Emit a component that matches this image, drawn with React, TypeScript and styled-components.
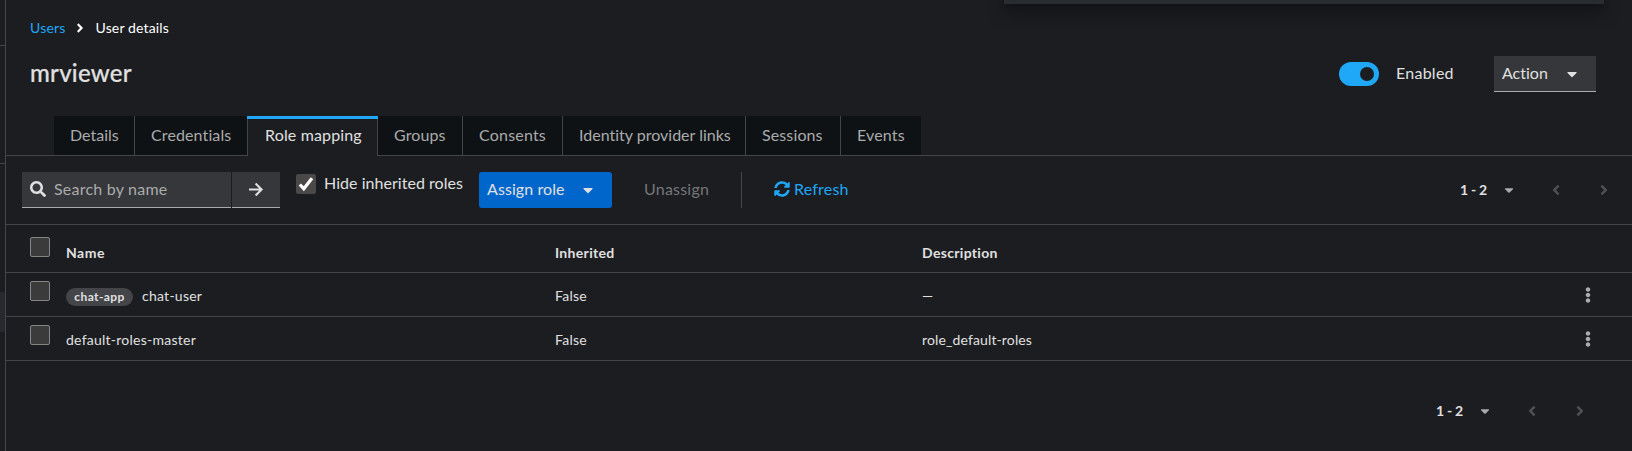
import React from "react";
import styled, { createGlobalStyle, css } from "styled-components";
import {
  FaAngleLeft,
  FaAngleRight,
  FaCaretDown,
  FaEllipsisV,
  FaSearch,
  FaSyncAlt,
} from "react-icons/fa";

const line = "#444548";
const surface = "#1b1d21";
const control = "#36373a";
const text = "#e0e0e0";
const muted = "#aaabac";
const link = "#1fa7f8";

const GlobalStyle = createGlobalStyle`
  * { box-sizing: border-box; }
  body {
    margin: 0;
    background: ${surface};
    color: ${text};
    font-family: Lato, "Liberation Sans", sans-serif;
    font-size: 16px;
    line-height: 24px;
    font-variant-ligatures: none;
    overflow: hidden;
  }
  svg { display: block; flex: none; }
`;

const Page = styled.div`
  display: flex;
  width: 1632px;
  height: 451px;
  position: relative;
`;

const Rail = styled.aside`
  width: 6px;
  flex: none;
  border-right: 1px solid ${line};
  display: flex;
  flex-direction: column;
`;

const RailSection = styled.div<{ $height: number }>`
  height: ${(p) => p.$height}px;
  border-bottom: 1px solid ${line};
`;

const RailCurrent = styled.div`
  height: 40px;
  margin-top: 128px;
  background: #26292d;
`;

const Popover = styled.div`
  position: absolute;
  top: 0;
  left: 1004px;
  width: 600px;
  height: 4px;
  background: #292c31;
  box-shadow: 0 8px 16px rgba(3, 3, 3, 0.8), 0 0 6px rgba(3, 3, 3, 0.6);
`;

const Main = styled.main`
  flex: 1;
  min-width: 0;
`;

const Label = styled.span<{ $track?: number }>`
  display: block;
  padding-bottom: 2px;
  letter-spacing: ${(p) => p.$track ?? 0}px;
  white-space: nowrap;
`;

const Breadcrumb = styled.nav`
  display: flex;
  align-items: center;
  height: 21px;
  margin: 18px 0 0 24px;
  font-size: 14px;
  color: #fff;
  svg { margin: -1px 9px 0 7px; }
`;

const Link = styled.a`
  color: ${link};
`;

const Header = styled.header`
  display: flex;
  align-items: center;
  height: 36px;
  margin: 17px 36px 0 24px;
`;

const Title = styled.h1`
  margin: -2px 0 0;
  flex: 1;
  font-size: 24px;
  font-weight: 500;
  line-height: 31px;
  -webkit-text-stroke: 0.2px ${text};
`;

const Toggle = styled.span`
  display: flex;
  justify-content: flex-end;
  align-items: center;
  width: 40px;
  height: 24px;
  padding-right: 5px;
  margin-right: 17px;
  border-radius: 12px;
  background: ${link};
  &::after {
    content: "";
    width: 14px;
    height: 14px;
    border-radius: 50%;
    background: ${surface};
  }
`;

const EnabledLabel = styled.div`
  width: 98px;
`;

const ActionButton = styled.button`
  display: flex;
  align-items: center;
  justify-content: space-between;
  width: 102px;
  height: 36px;
  padding: 0 16px 0 8px;
  border: 0;
  border-bottom: 1px solid ${muted};
  background: ${control};
  color: ${text};
  font: inherit;
`;

const Tabs = styled.div`
  display: flex;
  height: 40px;
  margin-top: 24px;
  padding-left: 48px;
  background: linear-gradient(${line}, ${line}) bottom / 100% 1px no-repeat;
`;

const Tab = styled.div<{ $width: number; $active?: boolean; $edge?: boolean }>`
  display: flex;
  align-items: center;
  width: ${(p) => p.$width}px;
  height: 39px;
  padding-left: 16px;
  background: #0f1214;
  color: ${muted};
  border-right: ${(p) => (p.$edge ? `1px solid ${line}` : 0)};
  ${(p) =>
    p.$active &&
    css`
      height: 40px;
      padding: 0 0 1px 18px;
      color: ${text};
      background: linear-gradient(${link}, ${link}) top / 100% 3px no-repeat,
        linear-gradient(${line}, ${line}) left / 1px 100% no-repeat,
        linear-gradient(${line}, ${line}) right / 1px 100% no-repeat, ${surface};
    `}
`;

const Toolbar = styled.div`
  display: flex;
  height: 69px;
  padding: 16px 0 0 16px;
  border-bottom: 1px solid ${line};
`;

const SearchField = styled.div`
  display: flex;
  align-items: center;
  gap: 8px;
  width: 209px;
  height: 36px;
  padding-left: 8px;
  background: ${control};
  border-bottom: 1px solid ${muted};
  color: ${muted};
  svg { color: ${text}; margin-top: -1px; }
`;

const SearchButton = styled.div`
  display: flex;
  align-items: center;
  justify-content: center;
  width: 48px;
  height: 36px;
  margin-left: 1px;
  background: ${control};
  border-bottom: 1px solid ${muted};
`;

const InheritedFilter = styled.div`
  display: flex;
  gap: 8px;
  width: 183px;
  height: 24px;
  margin-left: 16px;
  line-height: 22px;
`;

const Checked = styled.span`
  display: flex;
  align-items: center;
  justify-content: center;
  width: 20px;
  height: 20px;
  margin-top: 2px;
  border-radius: 2px;
  background: #4a4948;
  color: #fff;
`;

const AssignButton = styled.button`
  display: flex;
  align-items: center;
  justify-content: space-between;
  width: 133px;
  height: 36px;
  padding: 0 16px 0 8px;
  border: 0;
  border-radius: 3px;
  background: #0066cc;
  color: ${text};
  font: inherit;
`;

const Unassign = styled.div`
  width: 129px;
  padding-left: 32px;
  line-height: 34px;
  color: #75767a;
`;

const Divider = styled.div`
  width: 1px;
  height: 36px;
  background: ${line};
`;

const Refresh = styled.div`
  display: flex;
  align-items: center;
  gap: 4px;
  height: 36px;
  margin-left: 32px;
  color: ${link};
  svg { margin-top: -2px; }
`;

const Pagination = styled.div<{ $end: number }>`
  display: flex;
  align-items: center;
  height: 36px;
  margin-left: auto;
  margin-right: ${(p) => p.$end}px;
  font-size: 14px;
  font-weight: 700;
  > svg { color: #4f5052; margin-top: -1px; }
  > svg + svg { margin-left: 32px; }
`;

const Range = styled.span`
  display: flex;
  align-items: center;
  justify-content: space-between;
  width: 56px;
  margin-right: 32px;
  svg { color: ${muted}; margin-top: -1px; }
  ${Label} { padding: 0; }
`;

const Row = styled.div<{ $head?: boolean }>`
  display: grid;
  grid-template-columns: 60px 489px 367px 1fr 52px;
  height: ${(p) => (p.$head ? 48 : 44)}px;
  padding-top: ${(p) => (p.$head ? 17 : 12)}px;
  border-bottom: 1px solid ${line};
  font-size: 14px;
  line-height: 21px;
  font-weight: ${(p) => (p.$head ? 700 : 400)};
  ${Label} { padding: 0; }
`;

const Box = styled.span<{ $head?: boolean }>`
  width: 20px;
  height: 20px;
  margin: ${(p) => (p.$head ? -5 : -4)}px 0 0 24px;
  border: 1px solid #858585;
  border-radius: 2px;
  background: #3b3b3b;
`;

const NameCell = styled.div`
  display: flex;
  align-items: center;
  height: 21px;
  gap: 9px;
`;

const Badge = styled.span`
  display: flex;
  justify-content: center;
  width: 67px;
  height: 18px;
  margin-top: 2px;
  border-radius: 9px;
  background: #444548;
  font-size: 12px;
  line-height: 17px;
  font-weight: 700;
`;

const Kebab = styled(FaEllipsisV)`
  margin-top: 2px;
  color: ${muted};
`;

const Footer = styled.footer`
  display: flex;
  padding-top: 32px;
`;

const tabs = [
  { name: "Details", width: 81, edge: true },
  { name: "Credentials", width: 112, track: 0.12 },
  { name: "Role mapping", width: 131, active: true, track: 0.15 },
  { name: "Groups", width: 85, edge: true, track: 0.1 },
  { name: "Consents", width: 100, edge: true, track: 0.2 },
  { name: "Identity provider links", width: 183, edge: true },
  { name: "Sessions", width: 95, edge: true, track: 0.12 },
  { name: "Events", width: 80, track: 0.15 },
];

const roles = [
  { client: "chat-app", name: "chat-user", inherited: "False", description: "—" },
  { name: "default-roles-master", inherited: "False", description: "role_default-roles" },
];

function Arrow() {
  return (
    <svg width="16" height="16" viewBox="0 0 16 16" fill="none" stroke={text} strokeWidth="2.1">
      <path d="M1 7.5H13.4M7.6 1.5L13.6 7.5L7.6 13.5" />
    </svg>
  );
}

function Tick() {
  return (
    <svg width="16" height="16" viewBox="0 0 16 16" fill="none" stroke="currentColor" strokeWidth="3.2">
      <path d="M1.8 8.5L5.8 12.7L14 2.2" />
    </svg>
  );
}

function Pager({ end }: { end: number }) {
  return (
    <Pagination $end={end}>
      <Range>
        <Label $track={-0.3}>1 - 2</Label>
        <FaCaretDown size={14} />
      </Range>
      <FaAngleLeft size={16} />
      <FaAngleRight size={16} />
    </Pagination>
  );
}

export default function App() {
  return (
    <Page>
      <GlobalStyle />
      <Rail>
        <RailSection $height={46} />
        <RailSection $height={118} />
        <RailCurrent />
      </Rail>
      <Main>
        <Breadcrumb>
          <Link><Label $track={0.2}>Users</Label></Link>
          <FaAngleRight size={14} />
          <Label $track={0.15}>User details</Label>
        </Breadcrumb>
        <Header>
          <Title><Label $track={0.25}>mrviewer</Label></Title>
          <Toggle />
          <EnabledLabel><Label $track={0.25}>Enabled</Label></EnabledLabel>
          <ActionButton>
            <Label>Action</Label>
            <FaCaretDown size={16} />
          </ActionButton>
        </Header>
        <Tabs>
          {tabs.map((t) => (
            <Tab key={t.name} $width={t.width} $active={t.active} $edge={t.edge}>
              <Label $track={t.track}>{t.name}</Label>
            </Tab>
          ))}
        </Tabs>
        <Toolbar>
          <SearchField>
            <FaSearch size={16} />
            <Label $track={0.22}>Search by name</Label>
          </SearchField>
          <SearchButton><Arrow /></SearchButton>
          <InheritedFilter>
            <Checked><Tick /></Checked>
            <Label $track={0.04}>Hide inherited roles</Label>
          </InheritedFilter>
          <AssignButton>
            <Label $track={0.08}>Assign role</Label>
            <FaCaretDown size={16} />
          </AssignButton>
          <Unassign><Label $track={0.22}>Unassign</Label></Unassign>
          <Divider />
          <Refresh>
            <FaSyncAlt size={16} />
            <Label $track={0.2}>Refresh</Label>
          </Refresh>
          <Pager end={20} />
        </Toolbar>
        <Row $head>
          <Box $head />
          <Label $track={0.5}>Name</Label>
          <Label $track={0.32}>Inherited</Label>
          <Label $track={0.32}>Description</Label>
        </Row>
        {roles.map((r) => (
          <Row key={r.name}>
            <Box />
            <NameCell>
              {r.client && <Badge><Label $track={0.4}>{r.client}</Label></Badge>}
              <Label $track={0.25}>{r.name}</Label>
            </NameCell>
            <Label $track={0.25}>{r.inherited}</Label>
            <Label $track={0.13}>{r.description}</Label>
            <Kebab size={16} />
          </Row>
        ))}
        <Footer><Pager end={44} /></Footer>
      </Main>
      <Popover />
    </Page>
  );
}
